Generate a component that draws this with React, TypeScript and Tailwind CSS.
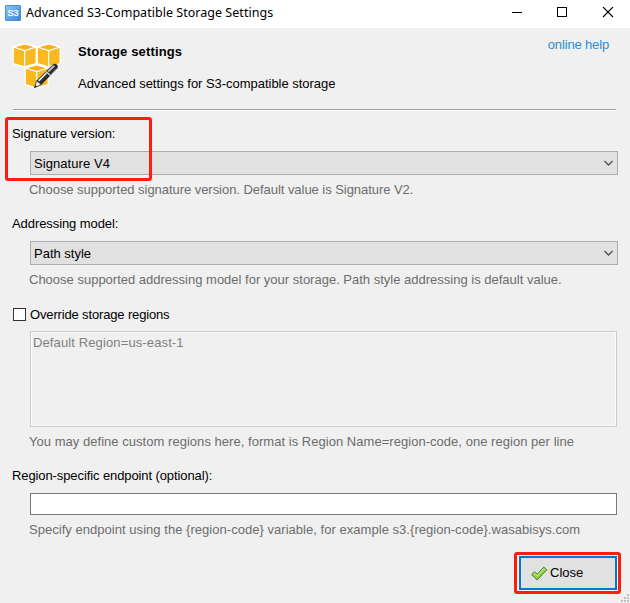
import React from "react";

interface ISelectProps {
	label: string;
	value: string;
	hint: string;
	labelClasses?: string;
	valueClasses?: string;
	hintClasses?: string;
}

const AppIcon = () => (
	<svg width="16" height="16" viewBox="0 0 16 16" className="shrink-0">
		<defs>
			<linearGradient id="app" x1="0" y1="0" x2="1" y2="1">
				<stop offset="0" stopColor="#8cc8f8" />
				<stop offset="1" stopColor="#3583da" />
			</linearGradient>
		</defs>
		<rect x="0.5" y="0.5" width="15" height="15" rx="0.5" fill="url(#app)" stroke="#4a90d6" />
		<text
			x="8"
			y="11"
			textAnchor="middle"
			fontSize="9"
			fontFamily="Liberation Sans, sans-serif"
			fill="#fff"
			stroke="#fff"
			strokeWidth="0.25"
		>
			S3
		</text>
	</svg>
);

const Cube = ({ x, y }: { x: number; y: number }) => (
	<g transform={`translate(${x} ${y})`} fill="#fbb81f" stroke="#fff" strokeWidth="1.3" strokeLinejoin="round">
		<path d="M0.6 4 L12 0.8 L23.6 4 V20.6 L12 23.8 L0.6 20.6 Z" />
		<path d="M0.6 4 L12 0.8 L23.6 4 L12 7.6 Z" fill="#f9b016" />
		<path d="M12 7.6 V23.6" />
	</g>
);

const StorageIcon = () => (
	<svg width="50" height="46" viewBox="0 0 50 46" className="shrink-0">
		<Cube x={0.6} y={0} />
		<Cube x={24.6} y={0} />
		<Cube x={12.6} y={21} />
		{/* pen */}
		<path d="M22.4 44.8 L24.6 37.6 L29.4 41.6 Z" fill="#eee" stroke="#444" strokeWidth="0.9" />
		<path d="M24.6 37.6 L41.2 21.2 Q43.4 20.2 45.2 21.8 Q46.4 23.4 45.4 25.2 L29.4 41.8 Z" fill="#2b2b2b" />
		<path d="M26.6 37.9 L34.4 30.2" stroke="#e4e4e4" strokeWidth="1.8" />
		<path d="M33.8 28.6 L38.6 32.6" stroke="#e0e0e0" strokeWidth="1.3" />
		<path d="M36.2 28.6 L42.2 22.7" stroke="#bdbdbd" strokeWidth="2" />
		<path d="M39.6 30.4 L44.6 25.2" stroke="#777" strokeWidth="0.9" />
		<path d="M22.4 44.8 L23.4 42 L25 43.4 Z" fill="#222" />
	</svg>
);

const CheckIcon = () => (
	<svg width="17" height="15" viewBox="0 0 17 15" className="shrink-0">
		<path
			d="M0.7 8.6 L3.5 5.9 L6.2 8.2 L12.8 1.1 L15.8 3.8 L6.1 13.9 Z"
			fill="#8ed63c"
			stroke="#3f7d2a"
			strokeLinejoin="round"
		/>
		<path d="M2.3 8.5 L3.6 7.3 L6.3 9.7 L12.9 2.5 L14.2 3.8" fill="none" stroke="#d6f5a6" strokeWidth="0.9" />
	</svg>
);

const Select = (props: ISelectProps) => {
	return (
		<div>
			<div className={`h-[18px] leading-5 pl-3 ${props.labelClasses || ""}`}>{props.label}</div>
			<div className="mt-[9px] ml-[30px] w-[588px] h-6 border border-[#adadad] bg-[#e1e1e1] flex items-center justify-between px-[3px]">
				<span className={`pt-0.5 ${props.valueClasses || ""}`}>{props.value}</span>
				<svg width="11" height="7" viewBox="0 0 11 7" fill="none" stroke="#505050" strokeWidth="1.3">
					<path d="M1.5 1 L5.5 5 L9.5 1" />
				</svg>
			</div>
			<div className={`mt-[5px] h-[18px] leading-5 pl-[29px] text-[#6d6d6d] ${props.hintClasses || ""}`}>
				{props.hint}
			</div>
		</div>
	);
};

const App = () => {
	return (
		<div className="relative w-[630px] h-[603px] bg-[#f0f0f0] overflow-hidden whitespace-nowrap text-[13px] text-black font-['Liberation_Sans',sans-serif]">
			{/* title bar */}
			<div className="h-7 bg-white flex items-start justify-between">
				<div className="flex items-center pl-[5px] pt-1">
					<AppIcon />
					<span className="ml-[5px] h-[18px] leading-[18px] text-[12.5px] tracking-[0.03px] font-['Noto_Sans',sans-serif]">
						Advanced S3-Compatible Storage Settings
					</span>
				</div>
				<svg width="103" height="11" viewBox="0 0 103 11" className="mt-[7px] mr-[15px]" fill="none" stroke="#000">
					<path d="M0 5.5 H10" />
					<rect x="45.5" y="0.5" width="9" height="9" />
					<path d="M91 0 L101 10 M101 0 L91 10" strokeWidth="1.1" />
				</svg>
			</div>

			{/* header */}
			<div className="h-[81px] flex items-start pl-3 pr-[21px]">
				<div className="pt-[15px]">
					<StorageIcon />
				</div>
				<div className="ml-4 pt-[14px] grow">
					<h1 className="h-[18px] leading-5 font-bold tracking-[0.15px]">Storage settings</h1>
					<p className="mt-[14px] h-[18px] leading-5 tracking-[-0.03px]">
						Advanced settings for S3-compatible storage
					</p>
				</div>
				<a href="#" className="mt-[7px] leading-5 tracking-[-0.15px] text-[#2a8dd4]">
					online help
				</a>
			</div>
			<div className="mx-[13px] w-[603px] h-0.5 bg-[#a0a0a0] border-b border-white"></div>

			<div className="pt-[13px]">
				<Select
					label="Signature version:"
					labelClasses="tracking-[-0.08px]"
					value="Signature V4"
					valueClasses="tracking-[0.07px]"
					hint="Choose supported signature version. Default value is Signature V2."
					hintClasses="tracking-[-0.045px]"
				/>
			</div>
			<div className="pt-4">
				<Select
					label="Addressing model:"
					labelClasses="tracking-[-0.08px]"
					value="Path style"
					hint="Choose supported addressing model for your storage. Path style addressing is default value."
				/>
			</div>

			{/* regions */}
			<label className="mt-[17px] ml-[13px] h-[18px] flex items-center">
				<span className="w-[13px] h-[13px] border border-[#333] bg-white"></span>
				<span className="ml-1 pt-0.5 tracking-[-0.15px]">Override storage regions</span>
			</label>
			<div className="mt-2 ml-[30px] w-[587px] h-24 border border-[#cccccc] p-px">
				<div className="h-full shadow-[0_0_0_1px_#fafafa] pl-px pt-px leading-[18px] tracking-[0.12px] text-[#808080]">
					Default Region=us-east-1
				</div>
			</div>
			<div className="mt-[5px] h-[18px] leading-5 pl-[29px] tracking-[0.035px] text-[#6d6d6d]">
				You may define custom regions here, format is Region Name=region-code, one region per line
			</div>

			{/* endpoint */}
			<div className="mt-4 h-[18px] leading-5 pl-3 tracking-[-0.1px]">Region-specific endpoint (optional):</div>
			<div className="mt-[9px] ml-[30px] w-[587px] h-[22px] border border-[#7a7a7a] bg-white"></div>
			<div className="mt-[5px] h-[18px] leading-5 pl-[29px] tracking-[0.035px] text-[#6d6d6d]">
				Specify endpoint using the {"{region-code}"} variable, for example s3.{"{region-code}"}.wasabisys.com
			</div>

			{/* footer */}
			<div className="mt-[14px] ml-[514px] w-[107px] h-[42px] border-3 border-[#ff1d12] rounded-[3px] pl-0.5 pt-px">
				<button className="w-[98px] h-[34px] border-2 border-[#0078d7] bg-[#e1e1e1] flex items-center pl-[10px]">
					<CheckIcon />
					<span className="ml-[2px]">Close</span>
				</button>
			</div>

			{/* highlight frame */}
			<div className="absolute left-[5px] top-[117px] w-[147px] h-16 border-3 border-[#ff1d12] rounded-[3px]"></div>

			{/* resize grip */}
			<svg className="absolute right-0 bottom-0" width="10" height="10" viewBox="0 0 10 10" fill="#bfbfbf">
				<path d="M7 1h2v2h-2z M4 4h2v2h-2z M7 4h2v2h-2z M1 7h2v2h-2z M4 7h2v2h-2z M7 7h2v2h-2z" />
			</svg>
		</div>
	);
};

export default App;
